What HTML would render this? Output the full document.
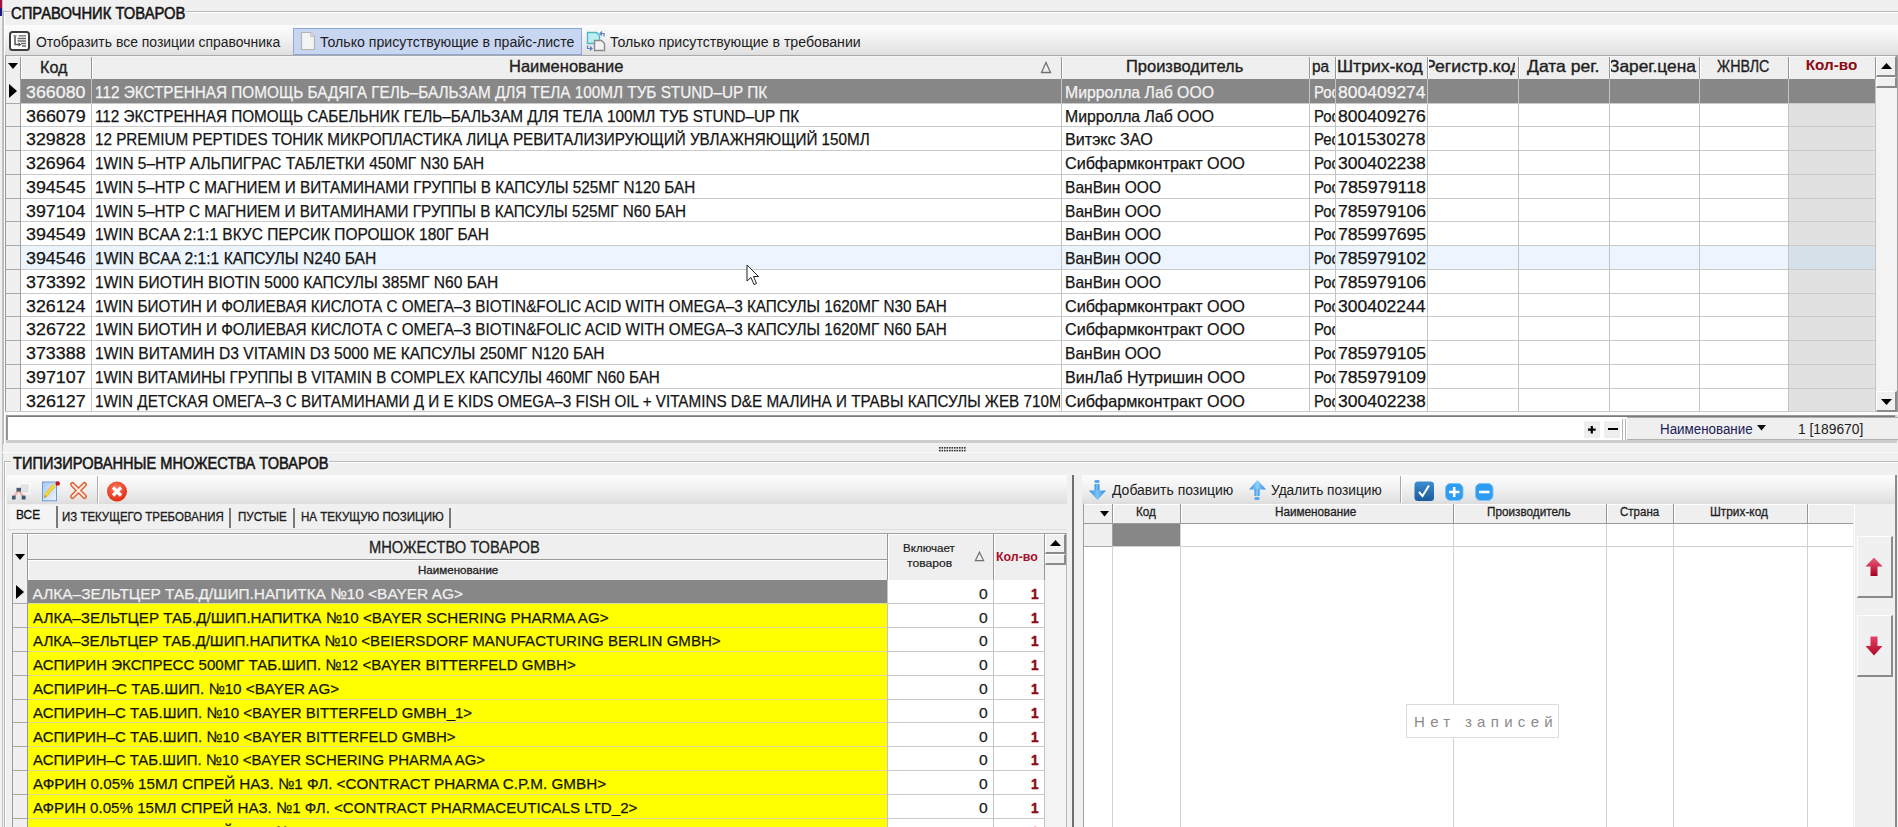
<!DOCTYPE html>
<html><head><meta charset="utf-8"><style>
html,body{margin:0;padding:0;width:1898px;height:827px;overflow:hidden;background:#f0f0f0;position:relative;font-family:"Liberation Sans", sans-serif;}
body>div,.c>div{position:absolute;}
.t{white-space:pre;}
svg{display:block;overflow:visible;}
.c{overflow:hidden;}
</style></head><body>
<div style="left:0px;top:0px;width:2px;height:8px;background:#a01040;"></div>
<div style="left:0px;top:8px;width:2px;height:8px;background:#1c1c80;"></div>
<div style="left:2px;top:0px;width:1px;height:827px;background:#c4c4c4;"></div>
<div style="left:3px;top:11px;width:1895px;height:1px;background:#b9b9b9;"></div>
<div style="left:4px;top:12px;width:1894px;height:1px;background:#ffffff;"></div>
<div style="left:3px;top:11px;width:1px;height:433px;background:#b9b9b9;"></div>
<div style="left:4px;top:12px;width:1px;height:432px;background:#ffffff;"></div>
<div style="left:10px;top:3px;width:176px;height:19px;background:#f0f0f0;"></div>
<div class="t" style="left:11.26px;top:6.00px;font-size:15.84px;line-height:15.84px;color:#141414;-webkit-text-stroke:0.55px #141414;transform:scaleX(0.9337);transform-origin:0 0;">СПРАВОЧНИК ТОВАРОВ</div>
<div style="left:5px;top:25px;width:1893px;height:31px;background:linear-gradient(#fcfcfc 0%,#f6f6f6 30%,#e4e4e4 85%,#dcdcdc 100%);"></div>
<div style="left:5px;top:55px;width:1893px;height:1px;background:#a9a9a9;"></div>
<div style="left:5px;top:56px;width:1893px;height:1px;background:#f4f4f4;"></div>
<div style="left:9px;top:31px;width:21px;height:19.5px;background:#fff;border:2.2px solid #3e3e3e;border-radius:3.5px;box-sizing:border-box"></div>
<div style="left:13px;top:35px;width:14px;height:12px"><svg width="14" height="12" viewBox="0 0 14 12"><path d="M0.5 0.8h3M5.5 0.8h7.5M4.5 3.5h8.5M4.5 6h8.5M8 8.5h5M9 11h4" stroke="#6a6a6a" stroke-width="1.3"/><path d="M2 1.5v8h4" stroke="#4e5660" stroke-width="1.5" fill="none"/><path d="M5.5 7.2l3 2.3l-3 2.3z" fill="#4e5660"/></svg></div>
<div class="t" style="left:35.67px;top:35.00px;font-size:14.83px;line-height:14.83px;color:#202020;transform:scaleX(0.9407);transform-origin:0 0;">Отобразить все позиции справочника</div>
<div style="left:293px;top:28px;width:289px;height:27px;background:#c8d6f2;border:1px solid #8ea7d6;box-sizing:border-box"></div>
<div style="left:300px;top:31px;width:16px;height:20px"><svg width="16" height="20" viewBox="0 0 16 20"><path d="M1.5 1.5h9l4 4v13h-13z" fill="#f4f4f4" stroke="#b4b4b4" stroke-width="1.2"/><path d="M10.5 1.5v4h4" fill="#ddd" stroke="#c4c4c4" stroke-width="1"/></svg></div>
<div class="t" style="left:320.02px;top:35.00px;font-size:14.83px;line-height:14.83px;color:#202020;transform:scaleX(0.9535);transform-origin:0 0;">Только присутствующие в прайс-листе</div>
<div style="left:586px;top:30px;width:22px;height:22px"><svg width="22" height="22" viewBox="0 0 22 22"><path d="M1.5 2.5h9l3 3v8h-12z" fill="#bfeef2" stroke="#4fb8c0" stroke-width="1.4"/><path d="M8.5 10.5h7l3 3v7h-10z" fill="#f2f2f2" stroke="#8a8a8a" stroke-width="1.4"/><path d="M16 1.5l-2 2l2 2M14 3.5h4v3" stroke="#5a7fc0" stroke-width="1.2" fill="none"/><path d="M1.5 15.5v3h4M4 16.5l2 2l-2 2" stroke="#5a7fc0" stroke-width="1.2" fill="none"/></svg></div>
<div class="t" style="left:610.42px;top:35.00px;font-size:14.83px;line-height:14.83px;color:#202020;transform:scaleX(0.9535);transform-origin:0 0;">Только присутствующие в требовании</div>
<div style="left:5px;top:57px;width:1871px;height:22px;background:#efefef;"></div>
<div style="left:20px;top:57px;width:1px;height:22px;background:#979797;"></div>
<div style="left:21px;top:57px;width:1px;height:22px;background:#ffffff;"></div>
<div style="left:91px;top:57px;width:1px;height:22px;background:#979797;"></div>
<div style="left:92px;top:57px;width:1px;height:22px;background:#ffffff;"></div>
<div style="left:1061px;top:57px;width:1px;height:22px;background:#979797;"></div>
<div style="left:1062px;top:57px;width:1px;height:22px;background:#ffffff;"></div>
<div style="left:1309px;top:57px;width:1px;height:22px;background:#979797;"></div>
<div style="left:1310px;top:57px;width:1px;height:22px;background:#ffffff;"></div>
<div style="left:1335px;top:57px;width:1px;height:22px;background:#979797;"></div>
<div style="left:1336px;top:57px;width:1px;height:22px;background:#ffffff;"></div>
<div style="left:1427px;top:57px;width:1px;height:22px;background:#979797;"></div>
<div style="left:1428px;top:57px;width:1px;height:22px;background:#ffffff;"></div>
<div style="left:1518px;top:57px;width:1px;height:22px;background:#979797;"></div>
<div style="left:1519px;top:57px;width:1px;height:22px;background:#ffffff;"></div>
<div style="left:1609px;top:57px;width:1px;height:22px;background:#979797;"></div>
<div style="left:1610px;top:57px;width:1px;height:22px;background:#ffffff;"></div>
<div style="left:1699px;top:57px;width:1px;height:22px;background:#979797;"></div>
<div style="left:1700px;top:57px;width:1px;height:22px;background:#ffffff;"></div>
<div style="left:1788px;top:57px;width:1px;height:22px;background:#979797;"></div>
<div style="left:1789px;top:57px;width:1px;height:22px;background:#ffffff;"></div>
<div style="left:1875px;top:57px;width:1px;height:22px;background:#979797;"></div>
<div style="left:1876px;top:57px;width:1px;height:22px;background:#ffffff;"></div>
<div style="left:5px;top:55px;width:1px;height:357px;background:#9a9a9a;"></div>
<div style="left:6px;top:79px;width:14px;height:333px;background:#f0f0f0;"></div>
<div style="left:21px;top:79px;width:1767px;height:333px;background:#ffffff;"></div>
<div style="left:1789px;top:79px;width:86px;height:333px;background:#e1e1e1;"></div>
<div style="left:21px;top:245px;width:1767px;height:24px;background:#ecf5fd;"></div>
<div style="left:1789px;top:245px;width:86px;height:24px;background:#d6e0e9;"></div>
<div style="left:21px;top:79px;width:1854px;height:24px;background:#878787;"></div>
<div style="left:21px;top:103px;width:1854px;height:1px;background:#c9c9c9;"></div>
<div style="left:6px;top:103px;width:14px;height:1px;background:#a9a9a9;"></div>
<div style="left:21px;top:126px;width:1854px;height:1px;background:#c9c9c9;"></div>
<div style="left:6px;top:126px;width:14px;height:1px;background:#a9a9a9;"></div>
<div style="left:21px;top:150px;width:1854px;height:1px;background:#c9c9c9;"></div>
<div style="left:6px;top:150px;width:14px;height:1px;background:#a9a9a9;"></div>
<div style="left:21px;top:174px;width:1854px;height:1px;background:#c9c9c9;"></div>
<div style="left:6px;top:174px;width:14px;height:1px;background:#a9a9a9;"></div>
<div style="left:21px;top:198px;width:1854px;height:1px;background:#c9c9c9;"></div>
<div style="left:6px;top:198px;width:14px;height:1px;background:#a9a9a9;"></div>
<div style="left:21px;top:221px;width:1854px;height:1px;background:#c9c9c9;"></div>
<div style="left:6px;top:221px;width:14px;height:1px;background:#a9a9a9;"></div>
<div style="left:21px;top:245px;width:1854px;height:1px;background:#c9c9c9;"></div>
<div style="left:6px;top:245px;width:14px;height:1px;background:#a9a9a9;"></div>
<div style="left:21px;top:269px;width:1854px;height:1px;background:#c9c9c9;"></div>
<div style="left:6px;top:269px;width:14px;height:1px;background:#a9a9a9;"></div>
<div style="left:21px;top:293px;width:1854px;height:1px;background:#c9c9c9;"></div>
<div style="left:6px;top:293px;width:14px;height:1px;background:#a9a9a9;"></div>
<div style="left:21px;top:316px;width:1854px;height:1px;background:#c9c9c9;"></div>
<div style="left:6px;top:316px;width:14px;height:1px;background:#a9a9a9;"></div>
<div style="left:21px;top:340px;width:1854px;height:1px;background:#c9c9c9;"></div>
<div style="left:6px;top:340px;width:14px;height:1px;background:#a9a9a9;"></div>
<div style="left:21px;top:364px;width:1854px;height:1px;background:#c9c9c9;"></div>
<div style="left:6px;top:364px;width:14px;height:1px;background:#a9a9a9;"></div>
<div style="left:21px;top:388px;width:1854px;height:1px;background:#c9c9c9;"></div>
<div style="left:6px;top:388px;width:14px;height:1px;background:#a9a9a9;"></div>
<div style="left:21px;top:411px;width:1854px;height:1px;background:#c9c9c9;"></div>
<div style="left:6px;top:411px;width:14px;height:1px;background:#a9a9a9;"></div>
<div style="left:91px;top:79px;width:1px;height:333px;background:#c4c4c4;"></div>
<div style="left:1061px;top:79px;width:1px;height:333px;background:#c4c4c4;"></div>
<div style="left:1309px;top:79px;width:1px;height:333px;background:#c4c4c4;"></div>
<div style="left:1335px;top:79px;width:1px;height:333px;background:#c4c4c4;"></div>
<div style="left:1427px;top:79px;width:1px;height:333px;background:#c4c4c4;"></div>
<div style="left:1518px;top:79px;width:1px;height:333px;background:#c4c4c4;"></div>
<div style="left:1609px;top:79px;width:1px;height:333px;background:#c4c4c4;"></div>
<div style="left:1699px;top:79px;width:1px;height:333px;background:#c4c4c4;"></div>
<div style="left:1788px;top:79px;width:1px;height:333px;background:#c4c4c4;"></div>
<div style="left:1875px;top:79px;width:1px;height:333px;background:#c4c4c4;"></div>
<div style="left:20px;top:79px;width:1px;height:333px;background:#a0a0a0;"></div>
<div style="left:5px;top:411px;width:1871px;height:1px;background:#c9c9c9;"></div>
<div style="left:9px;top:84px;width:9px;height:14px"><svg width="9" height="14"><path d="M0 0L8 7L0 14z" fill="#000"/></svg></div>
<div style="left:8px;top:63px;width:10px;height:7px"><svg width="10" height="7"><path d="M0 0H10L5 6z" fill="#000"/></svg></div>
<div class="t" style="left:40.41px;top:59.00px;font-size:16.28px;line-height:16.28px;color:#1e1e1e;-webkit-text-stroke:0.35px #1e1e1e;transform:scaleX(0.9940);transform-origin:0 0;">Код</div>
<div class="t" style="left:508.88px;top:58.00px;font-size:16.28px;line-height:16.28px;color:#1e1e1e;-webkit-text-stroke:0.35px #1e1e1e;transform:scaleX(1.0137);transform-origin:0 0;">Наименование</div>
<div style="left:1040px;top:61px;width:12px;height:13px"><svg width="12" height="13"><path d="M6 1.5L10.5 11.5H1.5z" fill="none" stroke="#707070" stroke-width="1.3"/></svg></div>
<div class="t" style="left:1125.68px;top:58.00px;font-size:16.28px;line-height:16.28px;color:#1e1e1e;-webkit-text-stroke:0.35px #1e1e1e;transform:scaleX(1.0130);transform-origin:0 0;">Производитель</div>
<div class="t" style="left:1312.07px;top:58.00px;font-size:16.30px;line-height:16.30px;color:#1e1e1e;-webkit-text-stroke:0.35px #1e1e1e;transform:scaleX(0.9468);transform-origin:0 0;">ра</div>
<div class="t" style="left:1337.19px;top:58.00px;font-size:16.28px;line-height:16.28px;color:#1e1e1e;-webkit-text-stroke:0.35px #1e1e1e;transform:scaleX(1.0799);transform-origin:0 0;">Штрих-код</div>
<div class="c" style="left:1429px;top:57px;width:86px;height:22px"><div class="t" style="left:-5.42px;top:1.00px;font-size:16.28px;line-height:16.28px;color:#1e1e1e;-webkit-text-stroke:0.35px #1e1e1e;transform:scaleX(1.0872);transform-origin:0 0;">Регистр.код</div></div>
<div class="t" style="left:1527.21px;top:58.00px;font-size:16.28px;line-height:16.28px;color:#1e1e1e;-webkit-text-stroke:0.35px #1e1e1e;transform:scaleX(1.0785);transform-origin:0 0;">Дата рег.</div>
<div class="c" style="left:1611px;top:57px;width:87px;height:22px"><div class="t" style="left:-1.52px;top:1.00px;font-size:16.28px;line-height:16.28px;color:#1e1e1e;-webkit-text-stroke:0.35px #1e1e1e;transform:scaleX(1.0642);transform-origin:0 0;">Зарег.цена</div></div>
<div class="t" style="left:1716.86px;top:58.00px;font-size:16.28px;line-height:16.28px;color:#1e1e1e;-webkit-text-stroke:0.35px #1e1e1e;transform:scaleX(0.8742);transform-origin:0 0;">ЖНВЛС</div>
<div class="t" style="left:1805.71px;top:57.00px;font-size:15.26px;line-height:15.26px;color:#8b0a14;font-weight:bold;">Кол-во</div>
<div class="t" style="left:26.38px;top:85.00px;font-size:16.72px;line-height:16.72px;color:#f4f4f4;-webkit-text-stroke:0.25px #f4f4f4;transform:scaleX(1.0677);transform-origin:0 0;">366080</div>
<div class="c" style="left:92px;top:78px;width:968px;height:24px"><div class="t" style="left:3.35px;top:7.00px;font-size:16.72px;line-height:16.72px;color:#f4f4f4;-webkit-text-stroke:0.25px #f4f4f4;transform:scaleX(0.9165);transform-origin:0 0;">112 ЭКСТРЕННАЯ ПОМОЩЬ БАДЯГА ГЕЛЬ–БАЛЬЗАМ ДЛЯ ТЕЛА 100МЛ ТУБ STUND–UP ПК</div></div>
<div class="t" style="left:1065.04px;top:85.00px;font-size:16.72px;line-height:16.72px;color:#f4f4f4;-webkit-text-stroke:0.25px #f4f4f4;transform:scaleX(0.9450);transform-origin:0 0;">Мирролла Лаб ООО</div>
<div class="c" style="left:1310px;top:78px;width:25px;height:24px"><div class="t" style="left:3.81px;top:7.00px;font-size:16.72px;line-height:16.72px;color:#f4f4f4;-webkit-text-stroke:0.25px #f4f4f4;transform:scaleX(0.8889);transform-origin:0 0;">Рос</div></div>
<div class="c" style="left:1336px;top:78px;width:91px;height:24px"><div class="t" style="left:1.80px;top:7.00px;font-size:16.72px;line-height:16.72px;color:#f4f4f4;-webkit-text-stroke:0.25px #f4f4f4;transform:scaleX(1.0474);transform-origin:0 0;">800409274</div></div>
<div class="t" style="left:26.37px;top:109.00px;font-size:16.72px;line-height:16.72px;color:#141414;-webkit-text-stroke:0.25px #141414;transform:scaleX(1.0710);transform-origin:0 0;">366079</div>
<div class="c" style="left:92px;top:102px;width:968px;height:24px"><div class="t" style="left:3.35px;top:7.00px;font-size:16.72px;line-height:16.72px;color:#141414;-webkit-text-stroke:0.25px #141414;transform:scaleX(0.9154);transform-origin:0 0;">112 ЭКСТРЕННАЯ ПОМОЩЬ САБЕЛЬНИК ГЕЛЬ–БАЛЬЗАМ ДЛЯ ТЕЛА 100МЛ ТУБ STUND–UP ПК</div></div>
<div class="t" style="left:1065.04px;top:109.00px;font-size:16.72px;line-height:16.72px;color:#141414;-webkit-text-stroke:0.25px #141414;transform:scaleX(0.9450);transform-origin:0 0;">Мирролла Лаб ООО</div>
<div class="c" style="left:1310px;top:102px;width:25px;height:24px"><div class="t" style="left:3.81px;top:7.00px;font-size:16.72px;line-height:16.72px;color:#141414;-webkit-text-stroke:0.25px #141414;transform:scaleX(0.8889);transform-origin:0 0;">Рос</div></div>
<div class="c" style="left:1336px;top:102px;width:91px;height:24px"><div class="t" style="left:1.80px;top:7.00px;font-size:16.72px;line-height:16.72px;color:#141414;-webkit-text-stroke:0.25px #141414;transform:scaleX(1.0506);transform-origin:0 0;">800409276</div></div>
<div class="t" style="left:26.37px;top:132.00px;font-size:16.72px;line-height:16.72px;color:#141414;-webkit-text-stroke:0.25px #141414;transform:scaleX(1.0693);transform-origin:0 0;">329828</div>
<div class="c" style="left:92px;top:126px;width:968px;height:24px"><div class="t" style="left:3.36px;top:6.00px;font-size:16.72px;line-height:16.72px;color:#141414;-webkit-text-stroke:0.25px #141414;transform:scaleX(0.9117);transform-origin:0 0;">12 PREMIUM PEPTIDES ТОНИК МИКРОПЛАСТИКА ЛИЦА РЕВИТАЛИЗИРУЮЩИЙ УВЛАЖНЯЮЩИЙ 150МЛ</div></div>
<div class="t" style="left:1065.01px;top:132.00px;font-size:16.72px;line-height:16.72px;color:#141414;-webkit-text-stroke:0.25px #141414;transform:scaleX(0.9648);transform-origin:0 0;">Витэкс ЗАО</div>
<div class="c" style="left:1310px;top:126px;width:25px;height:24px"><div class="t" style="left:3.81px;top:6.00px;font-size:16.72px;line-height:16.72px;color:#141414;-webkit-text-stroke:0.25px #141414;transform:scaleX(0.8910);transform-origin:0 0;">Рес</div></div>
<div class="c" style="left:1336px;top:126px;width:91px;height:24px"><div class="t" style="left:1.17px;top:6.00px;font-size:16.72px;line-height:16.72px;color:#141414;-webkit-text-stroke:0.25px #141414;transform:scaleX(1.0581);transform-origin:0 0;">101530278</div></div>
<div class="t" style="left:26.38px;top:156.00px;font-size:16.72px;line-height:16.72px;color:#141414;-webkit-text-stroke:0.25px #141414;transform:scaleX(1.0644);transform-origin:0 0;">326964</div>
<div class="c" style="left:92px;top:150px;width:968px;height:23px"><div class="t" style="left:3.34px;top:6.00px;font-size:16.72px;line-height:16.72px;color:#141414;-webkit-text-stroke:0.25px #141414;transform:scaleX(0.9227);transform-origin:0 0;">1WIN 5–HTP АЛЬПИГРАС ТАБЛЕТКИ 450МГ N30 БАН</div></div>
<div class="t" style="left:1065.49px;top:156.00px;font-size:16.72px;line-height:16.72px;color:#141414;-webkit-text-stroke:0.25px #141414;transform:scaleX(0.9694);transform-origin:0 0;">Сибфармконтракт ООО</div>
<div class="c" style="left:1310px;top:150px;width:25px;height:23px"><div class="t" style="left:3.81px;top:6.00px;font-size:16.72px;line-height:16.72px;color:#141414;-webkit-text-stroke:0.25px #141414;transform:scaleX(0.8889);transform-origin:0 0;">Рос</div></div>
<div class="c" style="left:1336px;top:150px;width:91px;height:23px"><div class="t" style="left:1.89px;top:6.00px;font-size:16.72px;line-height:16.72px;color:#141414;-webkit-text-stroke:0.25px #141414;transform:scaleX(1.0495);transform-origin:0 0;">300402238</div></div>
<div class="t" style="left:26.37px;top:180.00px;font-size:16.72px;line-height:16.72px;color:#141414;-webkit-text-stroke:0.25px #141414;transform:scaleX(1.0693);transform-origin:0 0;">394545</div>
<div class="c" style="left:92px;top:173px;width:968px;height:24px"><div class="t" style="left:3.35px;top:7.00px;font-size:16.72px;line-height:16.72px;color:#141414;-webkit-text-stroke:0.25px #141414;transform:scaleX(0.9155);transform-origin:0 0;">1WIN 5–HTP С МАГНИЕМ И ВИТАМИНАМИ ГРУППЫ В КАПСУЛЫ 525МГ N120 БАН</div></div>
<div class="t" style="left:1065.05px;top:180.00px;font-size:16.72px;line-height:16.72px;color:#141414;-webkit-text-stroke:0.25px #141414;transform:scaleX(0.9324);transform-origin:0 0;">ВанВин ООО</div>
<div class="c" style="left:1310px;top:173px;width:25px;height:24px"><div class="t" style="left:3.81px;top:7.00px;font-size:16.72px;line-height:16.72px;color:#141414;-webkit-text-stroke:0.25px #141414;transform:scaleX(0.8889);transform-origin:0 0;">Рос</div></div>
<div class="c" style="left:1336px;top:173px;width:91px;height:24px"><div class="t" style="left:1.61px;top:7.00px;font-size:16.72px;line-height:16.72px;color:#141414;-webkit-text-stroke:0.25px #141414;transform:scaleX(1.0689);transform-origin:0 0;">785979118</div></div>
<div class="t" style="left:26.38px;top:204.00px;font-size:16.72px;line-height:16.72px;color:#141414;-webkit-text-stroke:0.25px #141414;transform:scaleX(1.0644);transform-origin:0 0;">397104</div>
<div class="c" style="left:92px;top:197px;width:968px;height:24px"><div class="t" style="left:3.35px;top:7.00px;font-size:16.72px;line-height:16.72px;color:#141414;-webkit-text-stroke:0.25px #141414;transform:scaleX(0.9143);transform-origin:0 0;">1WIN 5–HTP С МАГНИЕМ И ВИТАМИНАМИ ГРУППЫ В КАПСУЛЫ 525МГ N60 БАН</div></div>
<div class="t" style="left:1065.05px;top:204.00px;font-size:16.72px;line-height:16.72px;color:#141414;-webkit-text-stroke:0.25px #141414;transform:scaleX(0.9324);transform-origin:0 0;">ВанВин ООО</div>
<div class="c" style="left:1310px;top:197px;width:25px;height:24px"><div class="t" style="left:3.81px;top:7.00px;font-size:16.72px;line-height:16.72px;color:#141414;-webkit-text-stroke:0.25px #141414;transform:scaleX(0.8889);transform-origin:0 0;">Рос</div></div>
<div class="c" style="left:1336px;top:197px;width:91px;height:24px"><div class="t" style="left:1.62px;top:7.00px;font-size:16.72px;line-height:16.72px;color:#141414;-webkit-text-stroke:0.25px #141414;transform:scaleX(1.0528);transform-origin:0 0;">785979106</div></div>
<div class="t" style="left:26.37px;top:227.00px;font-size:16.72px;line-height:16.72px;color:#141414;-webkit-text-stroke:0.25px #141414;transform:scaleX(1.0710);transform-origin:0 0;">394549</div>
<div class="c" style="left:92px;top:221px;width:968px;height:24px"><div class="t" style="left:3.34px;top:6.00px;font-size:16.72px;line-height:16.72px;color:#141414;-webkit-text-stroke:0.25px #141414;transform:scaleX(0.9266);transform-origin:0 0;">1WIN BCAA 2:1:1 ВКУС ПЕРСИК ПОРОШОК 180Г БАН</div></div>
<div class="t" style="left:1065.05px;top:227.00px;font-size:16.72px;line-height:16.72px;color:#141414;-webkit-text-stroke:0.25px #141414;transform:scaleX(0.9324);transform-origin:0 0;">ВанВин ООО</div>
<div class="c" style="left:1310px;top:221px;width:25px;height:24px"><div class="t" style="left:3.81px;top:6.00px;font-size:16.72px;line-height:16.72px;color:#141414;-webkit-text-stroke:0.25px #141414;transform:scaleX(0.8889);transform-origin:0 0;">Рос</div></div>
<div class="c" style="left:1336px;top:221px;width:91px;height:24px"><div class="t" style="left:1.62px;top:6.00px;font-size:16.72px;line-height:16.72px;color:#141414;-webkit-text-stroke:0.25px #141414;transform:scaleX(1.0528);transform-origin:0 0;">785997695</div></div>
<div class="t" style="left:26.37px;top:251.00px;font-size:16.72px;line-height:16.72px;color:#141414;-webkit-text-stroke:0.25px #141414;transform:scaleX(1.0693);transform-origin:0 0;">394546</div>
<div class="c" style="left:92px;top:245px;width:968px;height:23px"><div class="t" style="left:3.33px;top:6.00px;font-size:16.72px;line-height:16.72px;color:#141414;-webkit-text-stroke:0.25px #141414;transform:scaleX(0.9365);transform-origin:0 0;">1WIN BCAA 2:1:1 КАПСУЛЫ N240 БАН</div></div>
<div class="t" style="left:1065.05px;top:251.00px;font-size:16.72px;line-height:16.72px;color:#141414;-webkit-text-stroke:0.25px #141414;transform:scaleX(0.9324);transform-origin:0 0;">ВанВин ООО</div>
<div class="c" style="left:1310px;top:245px;width:25px;height:23px"><div class="t" style="left:3.81px;top:6.00px;font-size:16.72px;line-height:16.72px;color:#141414;-webkit-text-stroke:0.25px #141414;transform:scaleX(0.8889);transform-origin:0 0;">Рос</div></div>
<div class="c" style="left:1336px;top:245px;width:91px;height:23px"><div class="t" style="left:1.62px;top:6.00px;font-size:16.72px;line-height:16.72px;color:#141414;-webkit-text-stroke:0.25px #141414;transform:scaleX(1.0538);transform-origin:0 0;">785979102</div></div>
<div class="t" style="left:26.37px;top:275.00px;font-size:16.72px;line-height:16.72px;color:#141414;-webkit-text-stroke:0.25px #141414;transform:scaleX(1.0710);transform-origin:0 0;">373392</div>
<div class="c" style="left:92px;top:268px;width:968px;height:24px"><div class="t" style="left:3.33px;top:7.00px;font-size:16.72px;line-height:16.72px;color:#141414;-webkit-text-stroke:0.25px #141414;transform:scaleX(0.9321);transform-origin:0 0;">1WIN БИОТИН BIOTIN 5000 КАПСУЛЫ 385МГ N60 БАН</div></div>
<div class="t" style="left:1065.05px;top:275.00px;font-size:16.72px;line-height:16.72px;color:#141414;-webkit-text-stroke:0.25px #141414;transform:scaleX(0.9324);transform-origin:0 0;">ВанВин ООО</div>
<div class="c" style="left:1310px;top:268px;width:25px;height:24px"><div class="t" style="left:3.81px;top:7.00px;font-size:16.72px;line-height:16.72px;color:#141414;-webkit-text-stroke:0.25px #141414;transform:scaleX(0.8889);transform-origin:0 0;">Рос</div></div>
<div class="c" style="left:1336px;top:268px;width:91px;height:24px"><div class="t" style="left:1.62px;top:7.00px;font-size:16.72px;line-height:16.72px;color:#141414;-webkit-text-stroke:0.25px #141414;transform:scaleX(1.0528);transform-origin:0 0;">785979106</div></div>
<div class="t" style="left:26.38px;top:299.00px;font-size:16.72px;line-height:16.72px;color:#141414;-webkit-text-stroke:0.25px #141414;transform:scaleX(1.0644);transform-origin:0 0;">326124</div>
<div class="c" style="left:92px;top:292px;width:968px;height:24px"><div class="t" style="left:3.35px;top:7.00px;font-size:16.72px;line-height:16.72px;color:#141414;-webkit-text-stroke:0.25px #141414;transform:scaleX(0.9148);transform-origin:0 0;">1WIN БИОТИН И ФОЛИЕВАЯ КИСЛОТА С ОМЕГА–3 BIOTIN&amp;FOLIC ACID WITH OMEGA–3 КАПСУЛЫ 1620МГ N30 БАН</div></div>
<div class="t" style="left:1065.49px;top:299.00px;font-size:16.72px;line-height:16.72px;color:#141414;-webkit-text-stroke:0.25px #141414;transform:scaleX(0.9694);transform-origin:0 0;">Сибфармконтракт ООО</div>
<div class="c" style="left:1310px;top:292px;width:25px;height:24px"><div class="t" style="left:3.81px;top:7.00px;font-size:16.72px;line-height:16.72px;color:#141414;-webkit-text-stroke:0.25px #141414;transform:scaleX(0.8889);transform-origin:0 0;">Рос</div></div>
<div class="c" style="left:1336px;top:292px;width:91px;height:24px"><div class="t" style="left:1.89px;top:7.00px;font-size:16.72px;line-height:16.72px;color:#141414;-webkit-text-stroke:0.25px #141414;transform:scaleX(1.0464);transform-origin:0 0;">300402244</div></div>
<div class="t" style="left:26.37px;top:322.00px;font-size:16.72px;line-height:16.72px;color:#141414;-webkit-text-stroke:0.25px #141414;transform:scaleX(1.0710);transform-origin:0 0;">326722</div>
<div class="c" style="left:92px;top:316px;width:968px;height:24px"><div class="t" style="left:3.35px;top:6.00px;font-size:16.72px;line-height:16.72px;color:#141414;-webkit-text-stroke:0.25px #141414;transform:scaleX(0.9148);transform-origin:0 0;">1WIN БИОТИН И ФОЛИЕВАЯ КИСЛОТА С ОМЕГА–3 BIOTIN&amp;FOLIC ACID WITH OMEGA–3 КАПСУЛЫ 1620МГ N60 БАН</div></div>
<div class="t" style="left:1065.49px;top:322.00px;font-size:16.72px;line-height:16.72px;color:#141414;-webkit-text-stroke:0.25px #141414;transform:scaleX(0.9694);transform-origin:0 0;">Сибфармконтракт ООО</div>
<div class="c" style="left:1310px;top:316px;width:25px;height:24px"><div class="t" style="left:3.81px;top:6.00px;font-size:16.72px;line-height:16.72px;color:#141414;-webkit-text-stroke:0.25px #141414;transform:scaleX(0.8889);transform-origin:0 0;">Рос</div></div>
<div class="t" style="left:26.37px;top:346.00px;font-size:16.72px;line-height:16.72px;color:#141414;-webkit-text-stroke:0.25px #141414;transform:scaleX(1.0693);transform-origin:0 0;">373388</div>
<div class="c" style="left:92px;top:340px;width:968px;height:23px"><div class="t" style="left:3.33px;top:6.00px;font-size:16.72px;line-height:16.72px;color:#141414;-webkit-text-stroke:0.25px #141414;transform:scaleX(0.9332);transform-origin:0 0;">1WIN ВИТАМИН D3 VITAMIN D3 5000 МЕ КАПСУЛЫ 250МГ N120 БАН</div></div>
<div class="t" style="left:1065.05px;top:346.00px;font-size:16.72px;line-height:16.72px;color:#141414;-webkit-text-stroke:0.25px #141414;transform:scaleX(0.9324);transform-origin:0 0;">ВанВин ООО</div>
<div class="c" style="left:1310px;top:340px;width:25px;height:23px"><div class="t" style="left:3.81px;top:6.00px;font-size:16.72px;line-height:16.72px;color:#141414;-webkit-text-stroke:0.25px #141414;transform:scaleX(0.8889);transform-origin:0 0;">Рос</div></div>
<div class="c" style="left:1336px;top:340px;width:91px;height:23px"><div class="t" style="left:1.62px;top:6.00px;font-size:16.72px;line-height:16.72px;color:#141414;-webkit-text-stroke:0.25px #141414;transform:scaleX(1.0528);transform-origin:0 0;">785979105</div></div>
<div class="t" style="left:26.37px;top:370.00px;font-size:16.72px;line-height:16.72px;color:#141414;-webkit-text-stroke:0.25px #141414;transform:scaleX(1.0710);transform-origin:0 0;">397107</div>
<div class="c" style="left:92px;top:363px;width:968px;height:24px"><div class="t" style="left:3.36px;top:7.00px;font-size:16.72px;line-height:16.72px;color:#141414;-webkit-text-stroke:0.25px #141414;transform:scaleX(0.9112);transform-origin:0 0;">1WIN ВИТАМИНЫ ГРУППЫ В VITAMIN B COMPLEX КАПСУЛЫ 460МГ N60 БАН</div></div>
<div class="t" style="left:1065.01px;top:370.00px;font-size:16.72px;line-height:16.72px;color:#141414;-webkit-text-stroke:0.25px #141414;transform:scaleX(0.9654);transform-origin:0 0;">ВинЛаб Нутришин ООО</div>
<div class="c" style="left:1310px;top:363px;width:25px;height:24px"><div class="t" style="left:3.81px;top:7.00px;font-size:16.72px;line-height:16.72px;color:#141414;-webkit-text-stroke:0.25px #141414;transform:scaleX(0.8889);transform-origin:0 0;">Рос</div></div>
<div class="c" style="left:1336px;top:363px;width:91px;height:24px"><div class="t" style="left:1.62px;top:7.00px;font-size:16.72px;line-height:16.72px;color:#141414;-webkit-text-stroke:0.25px #141414;transform:scaleX(1.0538);transform-origin:0 0;">785979109</div></div>
<div class="t" style="left:26.37px;top:394.00px;font-size:16.72px;line-height:16.72px;color:#141414;-webkit-text-stroke:0.25px #141414;transform:scaleX(1.0710);transform-origin:0 0;">326127</div>
<div class="c" style="left:92px;top:387px;width:968px;height:24px"><div class="t" style="left:3.36px;top:7.00px;font-size:16.72px;line-height:16.72px;color:#141414;-webkit-text-stroke:0.25px #141414;transform:scaleX(0.9122);transform-origin:0 0;">1WIN ДЕТСКАЯ ОМЕГА–3 С ВИТАМИНАМИ Д И Е KIDS OMEGA–3 FISH OIL + VITAMINS D&amp;E МАЛИНА И ТРАВЫ КАПСУЛЫ ЖЕВ 710МГ</div></div>
<div class="t" style="left:1065.49px;top:394.00px;font-size:16.72px;line-height:16.72px;color:#141414;-webkit-text-stroke:0.25px #141414;transform:scaleX(0.9694);transform-origin:0 0;">Сибфармконтракт ООО</div>
<div class="c" style="left:1310px;top:387px;width:25px;height:24px"><div class="t" style="left:3.81px;top:7.00px;font-size:16.72px;line-height:16.72px;color:#141414;-webkit-text-stroke:0.25px #141414;transform:scaleX(0.8889);transform-origin:0 0;">Рос</div></div>
<div class="c" style="left:1336px;top:387px;width:91px;height:24px"><div class="t" style="left:1.89px;top:7.00px;font-size:16.72px;line-height:16.72px;color:#141414;-webkit-text-stroke:0.25px #141414;transform:scaleX(1.0495);transform-origin:0 0;">300402238</div></div>
<div style="left:1876px;top:56px;width:21px;height:356px;background:#f3f3f3;"></div>
<div style="left:1876px;top:56px;width:21px;height:21px;background:#f0f0f0;border-top:1px solid #fff;border-left:1px solid #fff;border-right:2px solid #8a8a8a;border-bottom:2px solid #8a8a8a;box-sizing:border-box"></div>
<div style="left:1881px;top:63px;width:11px;height:6px"><svg width="11" height="6"><path d="M0 6H11L5.5 0z" fill="#000"/></svg></div>
<div style="left:1876px;top:77px;width:21px;height:11px;background:#f0f0f0;border-top:1px solid #fff;border-left:1px solid #fff;border-right:2px solid #8a8a8a;border-bottom:2px solid #8a8a8a;box-sizing:border-box"></div>
<div style="left:1876px;top:391px;width:21px;height:21px;background:#f0f0f0;border-top:1px solid #fff;border-left:1px solid #fff;border-right:2px solid #8a8a8a;border-bottom:2px solid #8a8a8a;box-sizing:border-box"></div>
<div style="left:1881px;top:399px;width:11px;height:6px"><svg width="11" height="6"><path d="M0 0H11L5.5 6z" fill="#000"/></svg></div>
<div style="left:1897px;top:55px;width:1px;height:357px;background:#a0a0a0;"></div>
<div style="left:5px;top:412px;width:1892px;height:3px;background:#fbfbfb;"></div>
<div style="left:6px;top:416px;width:1891px;height:25px;background:#ffffff;"></div>
<div style="left:6px;top:415px;width:1891px;height:1px;background:#9a9a9a;"></div>
<div style="left:6px;top:416px;width:1891px;height:1px;background:#7a7a7a;"></div>
<div style="left:6px;top:415px;width:1px;height:28px;background:#8a8a8a;"></div>
<div style="left:7px;top:416px;width:1px;height:25px;background:#9a9a9a;"></div>
<div style="left:6px;top:440px;width:1891px;height:3px;background:#cdcdcd;"></div>
<div style="left:1895px;top:415px;width:2px;height:28px;background:#cdcdcd;"></div>
<div style="left:1584px;top:421px;width:16px;height:17px;background:#eeeeee;"></div>
<div style="left:1604px;top:421px;width:16px;height:17px;background:#eeeeee;"></div>
<div style="left:1587px;top:425px;width:10px;height:10px"><svg width="10" height="10"><path d="M1 4.7H8.6M4.8 1V8.6" stroke="#000" stroke-width="2.2"/></svg></div>
<div style="left:1608px;top:428px;width:9.5px;height:2.3px;background:#000;"></div>
<div style="left:1622px;top:419px;width:1px;height:21px;background:#b4b4b4;"></div>
<div style="left:1625px;top:419px;width:1px;height:21px;background:#b4b4b4;"></div>
<div style="left:1627px;top:417px;width:1268px;height:23px;background:#efefef;border:1px solid #b0b0b0;border-left:none;box-sizing:border-box"></div>
<div class="t" style="left:1659.53px;top:422.00px;font-size:14.24px;line-height:14.24px;color:#202058;transform:scaleX(0.9383);transform-origin:0 0;">Наименование</div>
<div style="left:1757px;top:425px;width:9px;height:6px"><svg width="9" height="6"><path d="M0 0H9L4.5 5.5z" fill="#111"/></svg></div>
<div class="t" style="left:1798.46px;top:422.00px;font-size:14.24px;line-height:14.24px;color:#202020;transform:scaleX(0.9698);transform-origin:0 0;">1 [189670]</div>
<div style="left:2px;top:452px;width:1896px;height:1px;background:#fafafa;"></div>
<div style="left:939px;top:447px;width:28px;height:5px"><svg width="28" height="5"><rect x="0.0" y="0" width="1.6" height="1.6" fill="#333"/><rect x="0.0" y="2.8" width="1.6" height="1.6" fill="#333"/><rect x="2.5" y="0" width="1.6" height="1.6" fill="#333"/><rect x="2.5" y="2.8" width="1.6" height="1.6" fill="#333"/><rect x="5.0" y="0" width="1.6" height="1.6" fill="#333"/><rect x="5.0" y="2.8" width="1.6" height="1.6" fill="#333"/><rect x="7.5" y="0" width="1.6" height="1.6" fill="#333"/><rect x="7.5" y="2.8" width="1.6" height="1.6" fill="#333"/><rect x="10.0" y="0" width="1.6" height="1.6" fill="#333"/><rect x="10.0" y="2.8" width="1.6" height="1.6" fill="#333"/><rect x="12.5" y="0" width="1.6" height="1.6" fill="#333"/><rect x="12.5" y="2.8" width="1.6" height="1.6" fill="#333"/><rect x="15.0" y="0" width="1.6" height="1.6" fill="#333"/><rect x="15.0" y="2.8" width="1.6" height="1.6" fill="#333"/><rect x="17.5" y="0" width="1.6" height="1.6" fill="#333"/><rect x="17.5" y="2.8" width="1.6" height="1.6" fill="#333"/><rect x="20.0" y="0" width="1.6" height="1.6" fill="#333"/><rect x="20.0" y="2.8" width="1.6" height="1.6" fill="#333"/><rect x="22.5" y="0" width="1.6" height="1.6" fill="#333"/><rect x="22.5" y="2.8" width="1.6" height="1.6" fill="#333"/><rect x="25.0" y="0" width="1.6" height="1.6" fill="#333"/><rect x="25.0" y="2.8" width="1.6" height="1.6" fill="#333"/></svg></div>
<div style="left:4px;top:461px;width:1894px;height:1px;background:#b9b9b9;"></div>
<div style="left:5px;top:462px;width:1893px;height:1px;background:#ffffff;"></div>
<div style="left:4px;top:461px;width:1px;height:366px;background:#b9b9b9;"></div>
<div style="left:5px;top:462px;width:1px;height:365px;background:#ffffff;"></div>
<div style="left:11px;top:453px;width:318px;height:17px;background:#f0f0f0;"></div>
<div class="t" style="left:13.01px;top:456.00px;font-size:15.84px;line-height:15.84px;color:#141414;-webkit-text-stroke:0.55px #141414;transform:scaleX(0.9228);transform-origin:0 0;">ТИПИЗИРОВАННЫЕ МНОЖЕСТВА ТОВАРОВ</div>
<div style="left:7px;top:475px;width:1066px;height:29px;background:linear-gradient(#fcfcfc 0%,#f6f6f6 30%,#e4e4e4 85%,#dcdcdc 100%);"></div>
<div style="left:1073px;top:475px;width:1px;height:352px;background:#8c8c8c;"></div>
<div style="left:97px;top:476px;width:1px;height:27px;background:#b0b0b0;"></div>
<div style="left:98px;top:476px;width:1px;height:27px;background:#ffffff;"></div>
<div style="left:11px;top:482px;width:20px;height:20px"><svg width="20" height="20"><rect x="8.5" y="1.5" width="10" height="10" fill="#e2e2e2" stroke="#fafafa" stroke-width="1.5"/><path d="M7.5 8L3 15M7.5 8L12.5 15" stroke="#f0b0a8" stroke-width="2.2"/><rect x="5.5" y="5.8" width="4.5" height="3.8" fill="#46586a"/><rect x="1" y="13.6" width="3.6" height="3.9" fill="#46586a"/><rect x="10.7" y="13.6" width="3.9" height="3.9" fill="#46586a"/></svg></div>
<div style="left:41px;top:481px;width:20px;height:21px"><svg width="20" height="21"><defs><linearGradient id="pn" x1="0" y1="0" x2="1" y2="1"><stop offset="0" stop-color="#a8c8f0"/><stop offset="1" stop-color="#eef5fe"/></linearGradient></defs><rect x="1.5" y="1" width="14" height="18.8" fill="url(#pn)" stroke="#6a9ad8" stroke-width="1"/><path d="M4 15L13.5 4" stroke="#e8c020" stroke-width="3.6"/><path d="M4 15L13.5 4" stroke="#f8e060" stroke-width="1.2"/><path d="M2.8 17L3.6 13.8L5.9 15.8z" fill="#c89030"/><circle cx="16.7" cy="2.5" r="2.2" fill="#c81020"/></svg></div>
<div style="left:69px;top:481px;width:19px;height:19px"><svg width="19" height="19"><path d="M3.5 3.5L15.5 15.5M15.5 3.5L3.5 15.5" stroke="#e0643a" stroke-width="5" stroke-linecap="round"/><path d="M3.5 3.5L15.5 15.5M15.5 3.5L3.5 15.5" stroke="#fff1e8" stroke-width="1.8" stroke-linecap="round"/></svg></div>
<div style="left:106px;top:481px;width:22px;height:21px"><svg width="22" height="21"><defs><radialGradient id="rg1" cx="45%" cy="35%" r="65%"><stop offset="0" stop-color="#ff7a60"/><stop offset="1" stop-color="#e02a10"/></radialGradient></defs><circle cx="11" cy="10.5" r="10" fill="url(#rg1)"/><path d="M7 6.5L15 14.5M15 6.5L7 14.5" stroke="#fff" stroke-width="3.2"/></svg></div>
<div style="left:7px;top:504px;width:1066px;height:25px;background:#f0f0f0;"></div>
<div style="left:9px;top:505px;width:47px;height:24px;background:#f4f4f4;"></div>
<div style="left:56px;top:506px;width:2px;height:22px;background:#7a7a7a;"></div>
<div style="left:229px;top:508px;width:2px;height:20px;background:#7a7a7a;"></div>
<div style="left:293px;top:508px;width:2px;height:20px;background:#7a7a7a;"></div>
<div style="left:449px;top:508px;width:2px;height:20px;background:#7a7a7a;"></div>
<div class="t" style="left:16.34px;top:509.00px;font-size:12.35px;line-height:12.35px;color:#101010;-webkit-text-stroke:0.3px #101010;transform:scaleX(0.9669);transform-origin:0 0;">ВСЕ</div>
<div class="t" style="left:61.58px;top:511.00px;font-size:12.35px;line-height:12.35px;color:#202020;-webkit-text-stroke:0.3px #202020;transform:scaleX(0.9302);transform-origin:0 0;">ИЗ ТЕКУЩЕГО ТРЕБОВАНИЯ</div>
<div class="t" style="left:237.77px;top:511.00px;font-size:12.35px;line-height:12.35px;color:#202020;-webkit-text-stroke:0.3px #202020;transform:scaleX(0.9378);transform-origin:0 0;">ПУСТЫЕ</div>
<div class="t" style="left:300.77px;top:511.00px;font-size:12.35px;line-height:12.35px;color:#202020;-webkit-text-stroke:0.3px #202020;transform:scaleX(0.9380);transform-origin:0 0;">НА ТЕКУЩУЮ ПОЗИЦИЮ</div>
<div style="left:7px;top:529px;width:1066px;height:1px;background:#dcdcdc;"></div>
<div style="left:12px;top:534px;width:1033px;height:46px;background:#efefef;"></div>
<div style="left:12px;top:533px;width:1054px;height:1px;background:#a0a0a0;"></div>
<div style="left:12px;top:534px;width:1054px;height:1px;background:#ffffff;"></div>
<div style="left:12px;top:534px;width:1px;height:293px;background:#9a9a9a;"></div>
<div style="left:27px;top:534px;width:1px;height:293px;background:#979797;"></div>
<div style="left:28px;top:534px;width:1px;height:46px;background:#ffffff;"></div>
<div style="left:28px;top:559px;width:860px;height:1px;background:#9a9a9a;"></div>
<div style="left:28px;top:560px;width:860px;height:1px;background:#ffffff;"></div>
<div style="left:887px;top:534px;width:1px;height:46px;background:#979797;"></div>
<div style="left:888px;top:534px;width:1px;height:46px;background:#ffffff;"></div>
<div style="left:993px;top:534px;width:1px;height:46px;background:#979797;"></div>
<div style="left:994px;top:534px;width:1px;height:46px;background:#ffffff;"></div>
<div style="left:1044px;top:534px;width:1px;height:46px;background:#979797;"></div>
<div style="left:15px;top:554px;width:10px;height:7px"><svg width="10" height="7"><path d="M0 0H10L5 6z" fill="#000"/></svg></div>
<div class="t" style="left:368.82px;top:540.00px;font-size:15.84px;line-height:15.84px;color:#1e1e1e;-webkit-text-stroke:0.3px #1e1e1e;transform:scaleX(0.9283);transform-origin:0 0;">МНОЖЕСТВО ТОВАРОВ</div>
<div class="t" style="left:418.07px;top:565.00px;font-size:11.34px;line-height:11.34px;color:#1e1e1e;-webkit-text-stroke:0.3px #1e1e1e;transform:scaleX(1.0228);transform-origin:0 0;">Наименование</div>
<div class="t" style="left:902.57px;top:543.00px;font-size:11.34px;line-height:11.34px;color:#1e1e1e;-webkit-text-stroke:0.2px #1e1e1e;transform:scaleX(1.0199);transform-origin:0 0;">Включает</div>
<div class="t" style="left:906.82px;top:558.00px;font-size:11.30px;line-height:11.30px;color:#1e1e1e;-webkit-text-stroke:0.2px #1e1e1e;transform:scaleX(1.0741);transform-origin:0 0;">товаров</div>
<div style="left:974px;top:551px;width:11px;height:11px"><svg width="11" height="11"><path d="M5.5 1.2L9.6 9.6H1.4z" fill="none" stroke="#707070" stroke-width="1.2"/></svg></div>
<div class="t" style="left:996.19px;top:551.00px;font-size:12.06px;line-height:12.06px;color:#a8102a;font-weight:bold;transform:scaleX(1.0301);transform-origin:0 0;">Кол-во</div>
<div style="left:13px;top:580px;width:14px;height:247px;background:#f0f0f0;"></div>
<div style="left:28px;top:580px;width:1016px;height:247px;background:#ffffff;"></div>
<div style="left:28px;top:603.8px;width:859px;height:223.2px;background:#ffff00;"></div>
<div style="left:28px;top:580px;width:859px;height:23.8px;background:#878787;"></div>
<div style="left:28px;top:603px;width:859px;height:1px;background:#d8d8a0;"></div>
<div style="left:888px;top:603px;width:156px;height:1px;background:#c9c9c9;"></div>
<div style="left:13px;top:603px;width:14px;height:1px;background:#a9a9a9;"></div>
<div style="left:28px;top:627px;width:859px;height:1px;background:#d8d8a0;"></div>
<div style="left:888px;top:627px;width:156px;height:1px;background:#c9c9c9;"></div>
<div style="left:13px;top:627px;width:14px;height:1px;background:#a9a9a9;"></div>
<div style="left:28px;top:651px;width:859px;height:1px;background:#d8d8a0;"></div>
<div style="left:888px;top:651px;width:156px;height:1px;background:#c9c9c9;"></div>
<div style="left:13px;top:651px;width:14px;height:1px;background:#a9a9a9;"></div>
<div style="left:28px;top:675px;width:859px;height:1px;background:#d8d8a0;"></div>
<div style="left:888px;top:675px;width:156px;height:1px;background:#c9c9c9;"></div>
<div style="left:13px;top:675px;width:14px;height:1px;background:#a9a9a9;"></div>
<div style="left:28px;top:699px;width:859px;height:1px;background:#d8d8a0;"></div>
<div style="left:888px;top:699px;width:156px;height:1px;background:#c9c9c9;"></div>
<div style="left:13px;top:699px;width:14px;height:1px;background:#a9a9a9;"></div>
<div style="left:28px;top:722px;width:859px;height:1px;background:#d8d8a0;"></div>
<div style="left:888px;top:722px;width:156px;height:1px;background:#c9c9c9;"></div>
<div style="left:13px;top:722px;width:14px;height:1px;background:#a9a9a9;"></div>
<div style="left:28px;top:746px;width:859px;height:1px;background:#d8d8a0;"></div>
<div style="left:888px;top:746px;width:156px;height:1px;background:#c9c9c9;"></div>
<div style="left:13px;top:746px;width:14px;height:1px;background:#a9a9a9;"></div>
<div style="left:28px;top:770px;width:859px;height:1px;background:#d8d8a0;"></div>
<div style="left:888px;top:770px;width:156px;height:1px;background:#c9c9c9;"></div>
<div style="left:13px;top:770px;width:14px;height:1px;background:#a9a9a9;"></div>
<div style="left:28px;top:794px;width:859px;height:1px;background:#d8d8a0;"></div>
<div style="left:888px;top:794px;width:156px;height:1px;background:#c9c9c9;"></div>
<div style="left:13px;top:794px;width:14px;height:1px;background:#a9a9a9;"></div>
<div style="left:28px;top:818px;width:859px;height:1px;background:#d8d8a0;"></div>
<div style="left:888px;top:818px;width:156px;height:1px;background:#c9c9c9;"></div>
<div style="left:13px;top:818px;width:14px;height:1px;background:#a9a9a9;"></div>
<div style="left:887px;top:580px;width:1px;height:247px;background:#c4c4c4;"></div>
<div style="left:993px;top:580px;width:1px;height:247px;background:#c4c4c4;"></div>
<div style="left:1044px;top:580px;width:1px;height:247px;background:#c4c4c4;"></div>
<div style="left:16px;top:585px;width:9px;height:14px"><svg width="9" height="14"><path d="M0 0L8 7L0 14z" fill="#000"/></svg></div>
<div class="t" style="left:32.60px;top:586.00px;font-size:15.41px;line-height:15.41px;color:#f0f0f0;-webkit-text-stroke:0.25px #f0f0f0;">АЛКА–ЗЕЛЬТЦЕР ТАБ.Д/ШИП.НАПИТКА №10 &lt;BAYER AG&gt;</div>
<div class="t" style="left:978.95px;top:586.00px;font-size:15.41px;line-height:15.41px;color:#202020;-webkit-text-stroke:0.25px #202020;transform:scaleX(1.0169);transform-origin:0 0;">0</div>
<div class="t" style="left:1031.48px;top:586.00px;font-size:15.41px;line-height:15.41px;color:#8b0a14;font-weight:bold;-webkit-text-stroke:0.5px #8b0a14;transform:scaleX(0.8836);transform-origin:0 0;">1</div>
<div class="t" style="left:32.60px;top:610.00px;font-size:15.41px;line-height:15.41px;color:#141400;-webkit-text-stroke:0.25px #141400;transform:scaleX(0.9834);transform-origin:0 0;">АЛКА–ЗЕЛЬТЦЕР ТАБ.Д/ШИП.НАПИТКА №10 &lt;BAYER SCHERING PHARMA AG&gt;</div>
<div class="t" style="left:978.95px;top:610.00px;font-size:15.41px;line-height:15.41px;color:#202020;-webkit-text-stroke:0.25px #202020;transform:scaleX(1.0169);transform-origin:0 0;">0</div>
<div class="t" style="left:1031.48px;top:610.00px;font-size:15.41px;line-height:15.41px;color:#8b0a14;font-weight:bold;-webkit-text-stroke:0.5px #8b0a14;transform:scaleX(0.8836);transform-origin:0 0;">1</div>
<div class="t" style="left:32.60px;top:633.00px;font-size:15.41px;line-height:15.41px;color:#141400;-webkit-text-stroke:0.25px #141400;transform:scaleX(0.9785);transform-origin:0 0;">АЛКА–ЗЕЛЬТЦЕР ТАБ.Д/ШИП.НАПИТКА №10 &lt;BEIERSDORF MANUFACTURING BERLIN GMBH&gt;</div>
<div class="t" style="left:978.95px;top:633.00px;font-size:15.41px;line-height:15.41px;color:#202020;-webkit-text-stroke:0.25px #202020;transform:scaleX(1.0169);transform-origin:0 0;">0</div>
<div class="t" style="left:1031.48px;top:633.00px;font-size:15.41px;line-height:15.41px;color:#8b0a14;font-weight:bold;-webkit-text-stroke:0.5px #8b0a14;transform:scaleX(0.8836);transform-origin:0 0;">1</div>
<div class="t" style="left:32.60px;top:657.00px;font-size:15.41px;line-height:15.41px;color:#141400;-webkit-text-stroke:0.25px #141400;transform:scaleX(0.9786);transform-origin:0 0;">АСПИРИН ЭКСПРЕСС 500МГ ТАБ.ШИП. №12 &lt;BAYER BITTERFELD GMBH&gt;</div>
<div class="t" style="left:978.95px;top:657.00px;font-size:15.41px;line-height:15.41px;color:#202020;-webkit-text-stroke:0.25px #202020;transform:scaleX(1.0169);transform-origin:0 0;">0</div>
<div class="t" style="left:1031.48px;top:657.00px;font-size:15.41px;line-height:15.41px;color:#8b0a14;font-weight:bold;-webkit-text-stroke:0.5px #8b0a14;transform:scaleX(0.8836);transform-origin:0 0;">1</div>
<div class="t" style="left:32.60px;top:681.00px;font-size:15.41px;line-height:15.41px;color:#141400;-webkit-text-stroke:0.25px #141400;transform:scaleX(0.9851);transform-origin:0 0;">АСПИРИН–С ТАБ.ШИП. №10 &lt;BAYER AG&gt;</div>
<div class="t" style="left:978.95px;top:681.00px;font-size:15.41px;line-height:15.41px;color:#202020;-webkit-text-stroke:0.25px #202020;transform:scaleX(1.0169);transform-origin:0 0;">0</div>
<div class="t" style="left:1031.48px;top:681.00px;font-size:15.41px;line-height:15.41px;color:#8b0a14;font-weight:bold;-webkit-text-stroke:0.5px #8b0a14;transform:scaleX(0.8836);transform-origin:0 0;">1</div>
<div class="t" style="left:32.60px;top:705.00px;font-size:15.41px;line-height:15.41px;color:#141400;-webkit-text-stroke:0.25px #141400;transform:scaleX(0.9732);transform-origin:0 0;">АСПИРИН–С ТАБ.ШИП. №10 &lt;BAYER BITTERFELD GMBH_1&gt;</div>
<div class="t" style="left:978.95px;top:705.00px;font-size:15.41px;line-height:15.41px;color:#202020;-webkit-text-stroke:0.25px #202020;transform:scaleX(1.0169);transform-origin:0 0;">0</div>
<div class="t" style="left:1031.48px;top:705.00px;font-size:15.41px;line-height:15.41px;color:#8b0a14;font-weight:bold;-webkit-text-stroke:0.5px #8b0a14;transform:scaleX(0.8836);transform-origin:0 0;">1</div>
<div class="t" style="left:32.60px;top:729.00px;font-size:15.41px;line-height:15.41px;color:#141400;-webkit-text-stroke:0.25px #141400;transform:scaleX(0.9737);transform-origin:0 0;">АСПИРИН–С ТАБ.ШИП. №10 &lt;BAYER BITTERFELD GMBH&gt;</div>
<div class="t" style="left:978.95px;top:729.00px;font-size:15.41px;line-height:15.41px;color:#202020;-webkit-text-stroke:0.25px #202020;transform:scaleX(1.0169);transform-origin:0 0;">0</div>
<div class="t" style="left:1031.48px;top:729.00px;font-size:15.41px;line-height:15.41px;color:#8b0a14;font-weight:bold;-webkit-text-stroke:0.5px #8b0a14;transform:scaleX(0.8836);transform-origin:0 0;">1</div>
<div class="t" style="left:32.60px;top:752.00px;font-size:15.41px;line-height:15.41px;color:#141400;-webkit-text-stroke:0.25px #141400;transform:scaleX(0.9706);transform-origin:0 0;">АСПИРИН–С ТАБ.ШИП. №10 &lt;BAYER SCHERING PHARMA AG&gt;</div>
<div class="t" style="left:978.95px;top:752.00px;font-size:15.41px;line-height:15.41px;color:#202020;-webkit-text-stroke:0.25px #202020;transform:scaleX(1.0169);transform-origin:0 0;">0</div>
<div class="t" style="left:1031.48px;top:752.00px;font-size:15.41px;line-height:15.41px;color:#8b0a14;font-weight:bold;-webkit-text-stroke:0.5px #8b0a14;transform:scaleX(0.8836);transform-origin:0 0;">1</div>
<div class="t" style="left:32.60px;top:776.00px;font-size:15.41px;line-height:15.41px;color:#141400;-webkit-text-stroke:0.25px #141400;transform:scaleX(0.9889);transform-origin:0 0;">АФРИН 0.05% 15МЛ СПРЕЙ НАЗ. №1 ФЛ. &lt;CONTRACT PHARMA C.P.M. GMBH&gt;</div>
<div class="t" style="left:978.95px;top:776.00px;font-size:15.41px;line-height:15.41px;color:#202020;-webkit-text-stroke:0.25px #202020;transform:scaleX(1.0169);transform-origin:0 0;">0</div>
<div class="t" style="left:1031.48px;top:776.00px;font-size:15.41px;line-height:15.41px;color:#8b0a14;font-weight:bold;-webkit-text-stroke:0.5px #8b0a14;transform:scaleX(0.8836);transform-origin:0 0;">1</div>
<div class="t" style="left:32.60px;top:800.00px;font-size:15.41px;line-height:15.41px;color:#141400;-webkit-text-stroke:0.25px #141400;transform:scaleX(0.9806);transform-origin:0 0;">АФРИН 0.05% 15МЛ СПРЕЙ НАЗ. №1 ФЛ. &lt;CONTRACT PHARMACEUTICALS LTD_2&gt;</div>
<div class="t" style="left:978.95px;top:800.00px;font-size:15.41px;line-height:15.41px;color:#202020;-webkit-text-stroke:0.25px #202020;transform:scaleX(1.0169);transform-origin:0 0;">0</div>
<div class="t" style="left:1031.48px;top:800.00px;font-size:15.41px;line-height:15.41px;color:#8b0a14;font-weight:bold;-webkit-text-stroke:0.5px #8b0a14;transform:scaleX(0.8836);transform-origin:0 0;">1</div>
<div class="t" style="left:32.60px;top:824.00px;font-size:15.41px;line-height:15.41px;color:#141400;-webkit-text-stroke:0.25px #141400;transform:scaleX(0.9812);transform-origin:0 0;">АФРИН 0.05% 15МЛ СПРЕЙ НАЗ. №1 ФЛ. &lt;CONTRACT PHARMACEUTICALS LTD&gt;</div>
<div class="t" style="left:978.95px;top:824.00px;font-size:15.41px;line-height:15.41px;color:#202020;-webkit-text-stroke:0.25px #202020;transform:scaleX(1.0169);transform-origin:0 0;">0</div>
<div class="t" style="left:1031.48px;top:824.00px;font-size:15.41px;line-height:15.41px;color:#8b0a14;font-weight:bold;-webkit-text-stroke:0.5px #8b0a14;transform:scaleX(0.8836);transform-origin:0 0;">1</div>
<div style="left:1045px;top:534px;width:21px;height:293px;background:#f3f3f3;"></div>
<div style="left:1045px;top:534px;width:21px;height:20px;background:#f0f0f0;border-top:1px solid #fff;border-left:1px solid #fff;border-right:2px solid #8a8a8a;border-bottom:2px solid #8a8a8a;box-sizing:border-box"></div>
<div style="left:1050px;top:540px;width:11px;height:6px"><svg width="11" height="6"><path d="M0 6H11L5.5 0z" fill="#000"/></svg></div>
<div style="left:1045px;top:554px;width:21px;height:11px;background:#f0f0f0;border-top:1px solid #fff;border-left:1px solid #fff;border-right:2px solid #8a8a8a;border-bottom:2px solid #8a8a8a;box-sizing:border-box"></div>
<div style="left:1066px;top:533px;width:1px;height:294px;background:#b8b8b8;"></div>
<div style="left:1067px;top:475px;width:5px;height:352px;background:#f0f0f0;"></div>
<div style="left:1072px;top:475px;width:2px;height:352px;background:#6e6e6e;"></div>
<div style="left:1082px;top:475px;width:813px;height:29px;background:linear-gradient(#fcfcfc 0%,#f6f6f6 30%,#e4e4e4 85%,#dcdcdc 100%);"></div>
<div style="left:1083px;top:504px;width:1px;height:323px;background:#a0a0a0;"></div>
<div style="left:1400px;top:476px;width:1px;height:27px;background:#a8a8a8;"></div>
<div style="left:1401px;top:476px;width:1px;height:27px;background:#ffffff;"></div>
<div style="left:1088px;top:479px;width:19px;height:22px"><svg width="19" height="22"><defs><linearGradient id="bl1" x1="0" x2="1"><stop offset="0" stop-color="#2f8fe0"/><stop offset="0.5" stop-color="#7cc4f8"/><stop offset="1" stop-color="#2a86d8"/></linearGradient></defs><rect x="6.5" y="1" width="5" height="3" rx="1" fill="#5aa8ea"/><rect x="6.5" y="5" width="5" height="8" fill="url(#bl1)"/><path d="M1 11.5H18L9.5 21z" fill="url(#bl1)"/></svg></div>
<div class="t" style="left:1111.63px;top:484.00px;font-size:13.81px;line-height:13.81px;color:#202020;transform:scaleX(1.0128);transform-origin:0 0;">Добавить позицию</div>
<div style="left:1248px;top:479px;width:19px;height:22px"><svg width="19" height="22"><defs><linearGradient id="bl2" x1="0" x2="1"><stop offset="0" stop-color="#2f8fe0"/><stop offset="0.5" stop-color="#8ed0fa"/><stop offset="1" stop-color="#2a86d8"/></linearGradient></defs><path d="M1 10.5H18L9.5 1z" fill="url(#bl2)"/><rect x="6.5" y="10" width="5" height="7" fill="url(#bl2)"/><rect x="6.5" y="18" width="5" height="3" rx="1" fill="#5aa8ea"/></svg></div>
<div class="t" style="left:1271.26px;top:484.00px;font-size:13.81px;line-height:13.81px;color:#202020;transform:scaleX(0.9928);transform-origin:0 0;">Удалить позицию</div>
<div style="left:1414px;top:481px;width:21px;height:21px"><svg width="21" height="21"><defs><linearGradient id="ck" x1="0" y1="0" x2="0" y2="1"><stop offset="0" stop-color="#3d8fd0"/><stop offset="1" stop-color="#1a5a9a"/></linearGradient></defs><rect x="0.5" y="0.5" width="19.5" height="19.5" rx="3.5" fill="url(#ck)"/><path d="M5 11L8.5 15L15 4.5" stroke="#fff" stroke-width="2" fill="none"/></svg></div>
<div style="left:1445px;top:483px;width:19px;height:18px"><svg width="19" height="18"><rect x="0.5" y="0.5" width="17.5" height="17" rx="5" fill="#2e9cf0" stroke="#7cc3fa"/><path d="M4 9H14.5M9.2 4V14" stroke="#fff" stroke-width="2.6"/></svg></div>
<div style="left:1475px;top:483px;width:19px;height:18px"><svg width="19" height="18"><rect x="0.5" y="0.5" width="17.5" height="17" rx="5" fill="#2e9cf0" stroke="#7cc3fa"/><path d="M4 9H14.5" stroke="#fff" stroke-width="2.6"/></svg></div>
<div style="left:1084px;top:504px;width:769px;height:19px;background:#efefef;"></div>
<div style="left:1084px;top:504px;width:769px;height:1px;background:#ffffff;"></div>
<div style="left:1084px;top:523px;width:769px;height:1px;background:#9a9a9a;"></div>
<div style="left:1084px;top:524px;width:769px;height:303px;background:#ffffff;"></div>
<div style="left:1112px;top:504px;width:1px;height:19px;background:#979797;"></div>
<div style="left:1113px;top:505px;width:1px;height:18px;background:#ffffff;"></div>
<div style="left:1112px;top:524px;width:1px;height:303px;background:#d2d2d2;"></div>
<div style="left:1180px;top:504px;width:1px;height:19px;background:#979797;"></div>
<div style="left:1181px;top:505px;width:1px;height:18px;background:#ffffff;"></div>
<div style="left:1180px;top:524px;width:1px;height:303px;background:#d2d2d2;"></div>
<div style="left:1453px;top:504px;width:1px;height:19px;background:#979797;"></div>
<div style="left:1454px;top:505px;width:1px;height:18px;background:#ffffff;"></div>
<div style="left:1453px;top:524px;width:1px;height:303px;background:#d2d2d2;"></div>
<div style="left:1606px;top:504px;width:1px;height:19px;background:#979797;"></div>
<div style="left:1607px;top:505px;width:1px;height:18px;background:#ffffff;"></div>
<div style="left:1606px;top:524px;width:1px;height:303px;background:#d2d2d2;"></div>
<div style="left:1673px;top:504px;width:1px;height:19px;background:#979797;"></div>
<div style="left:1674px;top:505px;width:1px;height:18px;background:#ffffff;"></div>
<div style="left:1673px;top:524px;width:1px;height:303px;background:#d2d2d2;"></div>
<div style="left:1807px;top:504px;width:1px;height:19px;background:#979797;"></div>
<div style="left:1808px;top:505px;width:1px;height:18px;background:#ffffff;"></div>
<div style="left:1807px;top:524px;width:1px;height:303px;background:#d2d2d2;"></div>
<div style="left:1084px;top:524px;width:28px;height:23px;background:#f0f0f0;"></div>
<div style="left:1112px;top:524px;width:1px;height:23px;background:#a0a0a0;"></div>
<div style="left:1113px;top:524px;width:67px;height:22.5px;background:#878787;"></div>
<div style="left:1084px;top:546px;width:769px;height:1px;background:#d0d0d0;"></div>
<div style="left:1084px;top:546px;width:28px;height:1px;background:#a9a9a9;"></div>
<div style="left:1100px;top:511px;width:9px;height:6px"><svg width="9" height="6"><path d="M0 0H9L4.5 5.5z" fill="#000"/></svg></div>
<div class="t" style="left:1135.86px;top:506.00px;font-size:12.50px;line-height:12.50px;color:#1e1e1e;-webkit-text-stroke:0.3px #1e1e1e;transform:scaleX(0.9361);transform-origin:0 0;">Код</div>
<div class="t" style="left:1274.76px;top:506.00px;font-size:12.50px;line-height:12.50px;color:#1e1e1e;-webkit-text-stroke:0.3px #1e1e1e;transform:scaleX(0.9373);transform-origin:0 0;">Наименование</div>
<div class="t" style="left:1486.76px;top:506.00px;font-size:12.50px;line-height:12.50px;color:#1e1e1e;-webkit-text-stroke:0.3px #1e1e1e;transform:scaleX(0.9386);transform-origin:0 0;">Производитель</div>
<div class="t" style="left:1619.72px;top:506.00px;font-size:12.50px;line-height:12.50px;color:#1e1e1e;-webkit-text-stroke:0.3px #1e1e1e;transform:scaleX(0.9229);transform-origin:0 0;">Страна</div>
<div class="t" style="left:1710.05px;top:506.00px;font-size:12.50px;line-height:12.50px;color:#1e1e1e;-webkit-text-stroke:0.3px #1e1e1e;transform:scaleX(0.9476);transform-origin:0 0;">Штрих-код</div>
<div style="left:1406px;top:704px;width:153px;height:34px;background:#ffffff;border:1px solid #dcdcdc;box-sizing:border-box"></div>
<div class="t" style="left:1414px;top:712px;font-size:15px;line-height:20px;letter-spacing:5.3px;color:#8a8a8a">Нет записей</div>
<div style="left:1853px;top:504px;width:42px;height:323px;background:#f0f0f0;"></div>
<div style="left:1854px;top:504px;width:1px;height:323px;background:#ffffff;"></div>
<div style="left:1895px;top:475px;width:2px;height:352px;background:#8c8c8c;"></div>
<div style="left:1857px;top:536px;width:36px;height:62px;background:#f0f0f0;border-top:1px solid #fdfdfd;border-left:1px solid #fdfdfd;border-right:2px solid #8a8a8a;border-bottom:2px solid #8a8a8a;box-sizing:border-box"></div>
<div style="left:1857px;top:615px;width:36px;height:62px;background:#f0f0f0;border-top:1px solid #fdfdfd;border-left:1px solid #fdfdfd;border-right:2px solid #8a8a8a;border-bottom:2px solid #8a8a8a;box-sizing:border-box"></div>
<div style="left:1865px;top:557px;width:18px;height:20px"><svg width="18" height="20"><defs><linearGradient id="ra" x1="0" y1="0" x2="0" y2="1"><stop offset="0" stop-color="#f06080"/><stop offset="1" stop-color="#a80020"/></linearGradient></defs><path d="M9 0.5L17.5 9.5H12.5V19H5.5V9.5H0.5z" fill="url(#ra)"/></svg></div>
<div style="left:1865px;top:636px;width:18px;height:20px"><svg width="18" height="20"><defs><linearGradient id="rb" x1="0" y1="0" x2="0" y2="1"><stop offset="0" stop-color="#e84060"/><stop offset="1" stop-color="#b00828"/></linearGradient></defs><path d="M5.5 0.5H12.5V10H17.5L9 19.5L0.5 10H5.5z" fill="url(#rb)"/></svg></div>
<div style="left:746px;top:264px;width:14px;height:22px"><svg width="14" height="22"><path d="M1 1V17L5 13.5L8 20.5L10.5 19.5L7.5 12.5H12.5z" fill="#fff" stroke="#222" stroke-width="1"/></svg></div>
</body></html>
